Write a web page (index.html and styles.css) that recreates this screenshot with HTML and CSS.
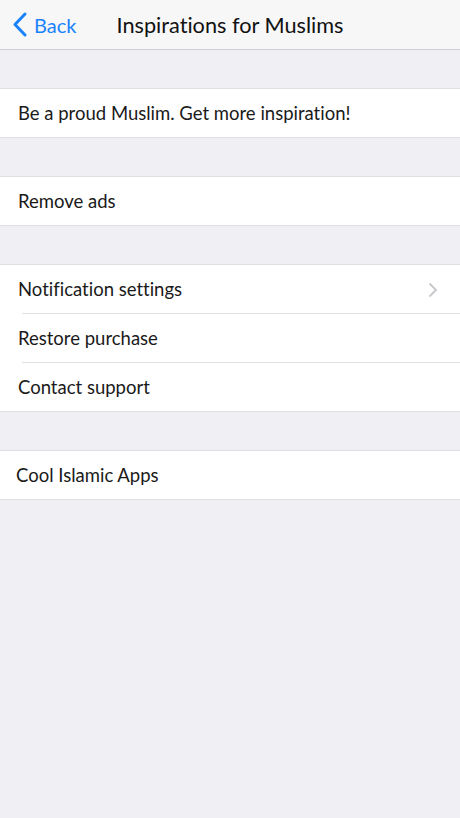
FILE: index.html
```html
<!DOCTYPE html>
<html lang="en">
<head>
    <meta charset="UTF-8">
    <meta name="viewport" content="width=device-width, initial-scale=1.0">
    <title>Inspirations for Muslims</title>
    <link rel="stylesheet" href="styles.css">
</head>
<body>
    <header class="nav-bar">
        <a class="back" href="#">
            <svg class="back-icon" width="16" height="25" viewBox="0 0 16 25">
                <path d="M13 2 L3 12.5 L13 23" fill="none" stroke="#1a82fb" stroke-width="3" stroke-linecap="round" stroke-linejoin="round"/>
            </svg>
            <span>Back</span>
        </a>
        <h1>Inspirations for Muslims</h1>
    </header>

    <div class="section">
        <div class="row">Be a proud Muslim. Get more inspiration!</div>
    </div>

    <div class="section">
        <div class="row">Remove ads</div>
    </div>

    <div class="section">
        <div class="row">
            Notification settings
            <svg class="chevron" width="10" height="16" viewBox="0 0 10 16">
                <path d="M1.5 1.5 L8 8 L1.5 14.5" fill="none" stroke="#c7c7cc" stroke-width="1.8"/>
            </svg>
        </div>
        <div class="row">Restore purchase</div>
        <div class="row">Contact support</div>
    </div>

    <div class="section">
        <div class="row apps">Cool Islamic Apps</div>
    </div>
</body>
</html>
```

FILE: styles.css
```css
body {
    margin: 0;
    background-color: #efeff4;
    font-family: 'Lato', 'Open Sans', sans-serif;
    font-variant-ligatures: none;
    color: #1a1a1a;
    height: 818px;
}

.nav-bar {
    height: 49px;
    background-color: #f7f7f8;
    border-bottom: 1px solid #d0d0d4;
    display: flex;
    align-items: center;
    position: relative;
}

.back {
    display: flex;
    align-items: center;
    gap: 6px;
    padding-left: 12px;
    color: #1a82fb;
    text-decoration: none;
    font-size: 20px;
    z-index: 1;
}

.nav-bar h1 {
    position: absolute;
    left: 0;
    right: 0;
    margin: 0;
    text-align: center;
    font-size: 21.7px;
    font-weight: normal;
    color: #111;
}

.section {
    margin-top: 38px;
    background-color: #ffffff;
    border-top: 1px solid #e0e0e4;
    border-bottom: 1px solid #e0e0e4;
}

.row {
    height: 48px;
    display: flex;
    align-items: center;
    justify-content: space-between;
    padding: 0 22px 0 18px;
    font-size: 18.5px;
}

/* inset separator between grouped rows */
.row + .row {
    height: 49px;
    padding-top: 1px;
    box-sizing: border-box;
    background: linear-gradient(#e0e0e4, #e0e0e4) no-repeat 22px 0 / calc(100% - 22px) 1px;
}

.apps {
    padding-left: 16px;
}

.chevron {
    margin-top: 1px;
}
```
